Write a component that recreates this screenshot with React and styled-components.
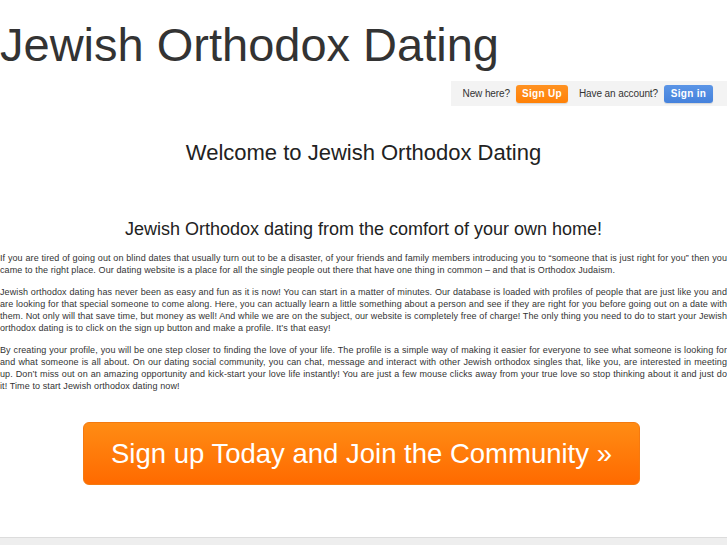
import React from 'react';
import styled, { createGlobalStyle } from 'styled-components';

const GlobalStyle = createGlobalStyle`
  html, body {
    margin: 0;
    padding: 0;
    background: #fff;
  }
  body {
    font-family: "Liberation Sans", Arial, Helvetica, sans-serif;
    color: #333;
  }
`;

const Page = styled.div`
  width: 727px;
  min-height: 545px;
  display: flex;
  flex-direction: column;
  overflow: hidden;
`;

const Logo = styled.h1`
  margin: 18px 0 0 0;
  font-size: 47px;
  line-height: 54px;
  font-weight: normal;
  color: #333;
`;

const AccountBar = styled.div`
  align-self: flex-end;
  display: flex;
  align-items: center;
  height: 25px;
  margin-top: 9px;
  padding: 0 14px 0 12px;
  background: #f3f3f3;
  font-size: 10px;
  letter-spacing: -0.1px;
  color: #333;
`;

const BarLabel = styled.span`
  margin-right: 6px;
`;

const SmallButton = styled.a`
  display: inline-flex;
  align-items: center;
  justify-content: center;
  height: 18px;
  width: ${(p) => p.$w}px;
  margin-right: ${(p) => p.$after}px;
  border-radius: 3px;
  font-weight: bold;
  font-size: 10px;
  color: #fff;
  letter-spacing: 0.3px;
  text-decoration: none;
  background: ${(p) =>
    p.$tone === 'blue'
      ? 'linear-gradient(#5b95e6, #4582dc)'
      : 'linear-gradient(#ff9222, #ff8107)'};
  box-shadow: 0 1px 1px rgba(0, 0, 0, 0.12);
`;

const Content = styled.main`
  display: flex;
  flex-direction: column;
  align-items: center;
`;

const Welcome = styled.h2`
  margin: 32px 0 0 0;
  font-size: 22px;
  line-height: 30px;
  font-weight: normal;
  color: #222;
`;

const Tagline = styled.h3`
  margin: 48px 0 0 0;
  font-size: 18px;
  line-height: 26px;
  font-weight: normal;
  color: #222;
`;

const Copy = styled.div`
  width: 727px;
  margin-top: 10px;
  display: flex;
  flex-direction: column;
  gap: 10px;
`;

const Paragraph = styled.p`
  margin: 0;
  font-size: 9px;
  line-height: 12px;
  letter-spacing: 0.1px;
  text-align: justify;
  color: #333;
`;

const JoinButton = styled.a`
  display: flex;
  align-items: center;
  justify-content: center;
  width: 557px;
  height: 63px;
  margin-top: 30px;
  margin-right: 4px;
  border-radius: 6px;
  background: linear-gradient(#ff8c14, #ff6a00);
  border: 1px solid #f47a10;
  box-sizing: border-box;
  color: #fff;
  font-size: 27.5px;
  text-decoration: none;
`;

const Footer = styled.footer`
  margin-top: auto;
  height: 7px;
  border-top: 1px solid #dcdcdc;
  background: #eeeeee;
`;

export default function App() {
  return (
    <>
      <GlobalStyle />
      <Page>
        <Logo>Jewish Orthodox Dating</Logo>
        <AccountBar>
          <BarLabel>New here?</BarLabel>
          <SmallButton $w={52} $after={11}>Sign Up</SmallButton>
          <BarLabel>Have an account?</BarLabel>
          <SmallButton $tone="blue" $w={49} $after={0}>Sign in</SmallButton>
        </AccountBar>
        <Content>
          <Welcome>Welcome to Jewish Orthodox Dating</Welcome>
          <Tagline>Jewish Orthodox dating from the comfort of your own home!</Tagline>
          <Copy>
            <Paragraph>
              If you are tired of going out on blind dates that usually turn out to be a disaster, of your friends and
              family members introducing you to “someone that is just right for you” then you came to the right place.
              Our dating website is a place for all the single people out there that have one thing in common – and that
              is Orthodox Judaism.
            </Paragraph>
            <Paragraph>
              Jewish orthodox dating has never been as easy and fun as it is now! You can start in a matter of minutes.
              Our database is loaded with profiles of people that are just like you and are looking for that special
              someone to come along. Here, you can actually learn a little something about a person and see if they are
              right for you before going out on a date with them. Not only will that save time, but money as well! And
              while we are on the subject, our website is completely free of charge! The only thing you need to do to
              start your Jewish orthodox dating is to click on the sign up button and make a profile. It’s that easy!
            </Paragraph>
            <Paragraph>
              By creating your profile, you will be one step closer to finding the love of your life. The profile is a
              simple way of making it easier for everyone to see what someone is looking for and what someone is all
              about. On our dating social community, you can chat, message and interact with other Jewish orthodox
              singles that, like you, are interested in meeting up. Don’t miss out on an amazing opportunity and
              kick-start your love life instantly! You are just a few mouse clicks away from your true love so stop
              thinking about it and just do it! Time to start Jewish orthodox dating now!
            </Paragraph>
          </Copy>
          <JoinButton href="#">Sign up Today and Join the Community »</JoinButton>
        </Content>
        <Footer />
      </Page>
    </>
  );
}
